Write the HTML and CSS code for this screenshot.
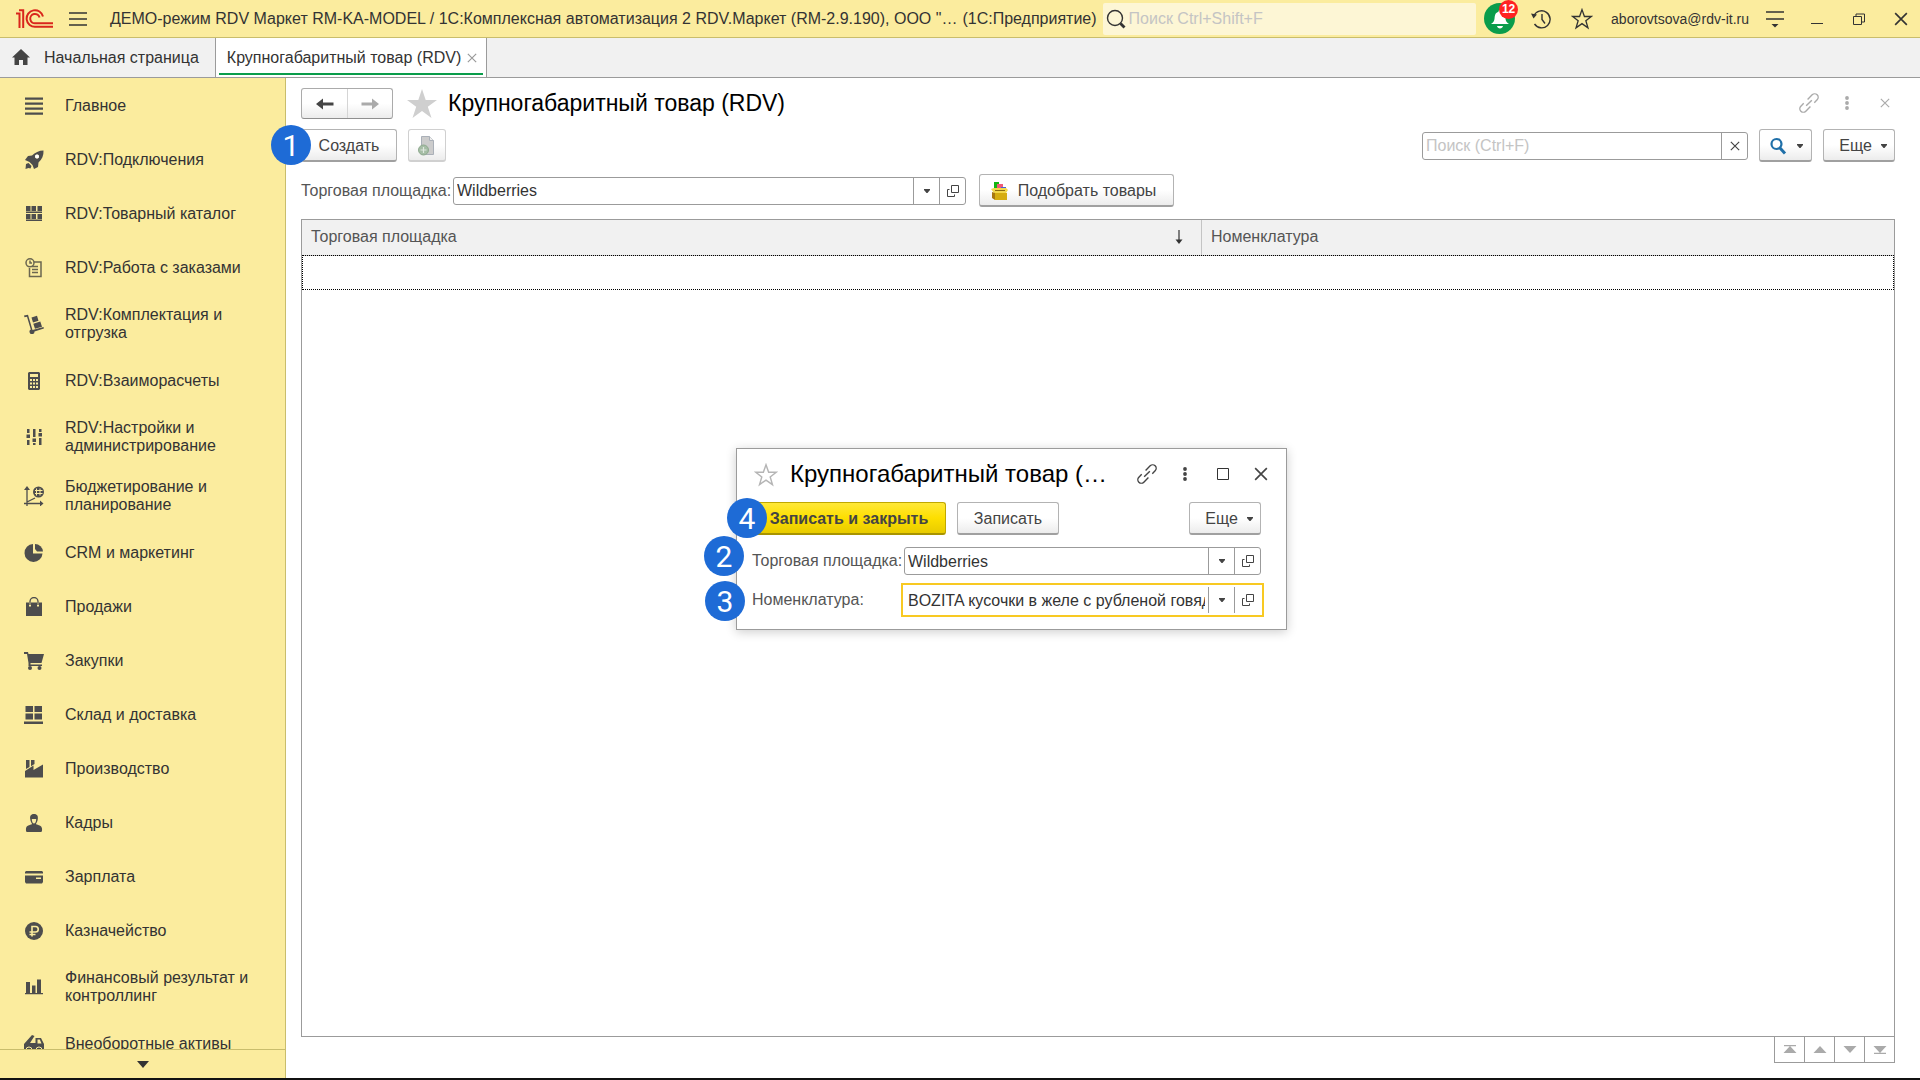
FILE: index.html
```
<!DOCTYPE html>
<html lang="ru">

<head>
    <meta charset="UTF-8">
    <meta name="viewport" content="width=device-width, initial-scale=1.0">
    <title>Крупногабаритный товар (RDV)</title>
    <link rel="stylesheet" href="styles.css">
</head>

<body>
    <!-- Общие значки -->
    <svg class="sprite" width="0" height="0" aria-hidden="true">
        <symbol id="i-down" viewBox="0 0 6 4"><path d="M0 0h6v1L3.500 4h-1L0 1z" fill="currentColor"/></symbol>
        <symbol id="i-open" viewBox="0 0 14 14"><path d="M5.500 1.500h7v7h-7zM3.500 5.500h-2v7h7v-2" fill="none" stroke="currentColor"/></symbol>
        <symbol id="i-link" viewBox="0 0 20 20"><path transform="rotate(-45 10 10)" d="M11.500 6.500h6.500a3.500 3.500 0 0 1 0 7h-4M8.500 13.500H2a3.500 3.500 0 0 1 0-7h4M6 10h8" fill="none" stroke="currentColor" stroke-width="1.400"/></symbol>
        <symbol id="i-dots" viewBox="0 0 4 14"><circle cx="2" cy="2" r="1.900"/><circle cx="2" cy="7" r="1.900"/><circle cx="2" cy="12" r="1.900"/></symbol>
        <symbol id="i-close" viewBox="0 0 12 12"><path d="M1 1l10 10M11 1L1 11" fill="none" stroke="currentColor" stroke-width="1.400"/></symbol>
        <symbol id="i-star" viewBox="0 0 20 20"><path d="M10 1.500l2.200 6.200h6.300l-5 3.900 1.900 6.400-5.400-3.800L4.600 18l1.900-6.400-5-3.900h6.300z" stroke="currentColor" stroke-width="1.200"/></symbol>
    </svg>

    <header class="topbar">
        <svg class="logo" width="38" height="20" viewBox="0 0 38 20" fill="none" stroke="#d9261c" stroke-width="2">
            <path d="M0 4.500h3.500V19M3 1.200h4.200V19"/>
            <path d="M27 7.500A8.300 8.300 0 1 0 19.500 17.800H37"/>
            <path d="M23.500 8.500A4.700 4.700 0 1 0 19.500 14.300H37"/>
        </svg>
        <button class="icon-btn burger" aria-label="Меню">
            <svg width="18" height="16" viewBox="0 0 18 16" stroke="#333" stroke-width="1.300"><path d="M0 2h18M0 8h18M0 14h18"/></svg>
        </button>
        <div class="app-title">ДЕМО-режим RDV Маркет RM-KA-MODEL / 1С:Комплексная автоматизация 2 RDV.Маркет (RM-2.9.190), ООО "…</div>
        <div class="app-name">(1С:Предприятие)</div>
        <label class="top-search">
            <svg width="20" height="20" viewBox="0 0 20 20" fill="none" stroke="#333"><circle cx="9" cy="9" r="7.500" stroke-width="1.400"/><path d="M14.500 14.500l4 4" stroke-width="2.800"/></svg>
            <input type="text" placeholder="Поиск Ctrl+Shift+F" aria-label="Поиск">
        </label>
        <button class="icon-btn bell" aria-label="Оповещения">
            <svg width="18" height="20" viewBox="0 0 18 20" fill="#fff"><path d="M9 1c1 0 1.500.7 1.500 1.700 3 .8 3.600 3.300 3.900 6.300.3 2.800 1 4.500 3.600 6H0c2.600-1.500 3.300-3.200 3.600-6 .3-3 .9-5.500 3.900-6.300C7.500 1.700 8 1 9 1zM6 17h6c-.3 1.600-1.500 2.500-3 2.500S6.300 18.600 6 17z"/></svg>
            <span class="bell-count">12</span>
        </button>
        <button class="icon-btn history" aria-label="История">
            <svg width="20" height="20" viewBox="0 0 20 20" fill="none" stroke="#333" stroke-width="1.400"><path d="M2.800 7A8.500 8.500 0 1 1 3.500 15M11 5v5.500l3 4"/><path d="M0 4.500l6 1-3.500 4z" fill="#333" stroke="none"/></svg>
        </button>
        <button class="icon-btn favorites" aria-label="Избранное">
            <svg width="22" height="22" fill="none" color="#333"><use href="#i-star"/></svg>
        </button>
        <a class="user" href="#">aborovtsova@rdv-it.ru</a>
        <button class="icon-btn settings" aria-label="Настройки">
            <svg width="18" height="18" viewBox="0 0 18 18" stroke="#333" stroke-width="1.400"><path d="M0 2h18M0 9h18"/><path d="M5.500 14h7L9 17.500z" fill="#333" stroke="none"/></svg>
        </button>
        <button class="icon-btn minimize" aria-label="Свернуть">
            <svg width="12" height="12" viewBox="0 0 12 12" stroke="#333"><path d="M0 10.500h12"/></svg>
        </button>
        <button class="icon-btn restore" aria-label="Развернуть">
            <svg width="12" height="12" viewBox="0 0 12 12" fill="none" stroke="#333"><path d="M.500 3.500h8v8h-8zM3 3V1h8.500v8H9"/></svg>
        </button>
        <button class="icon-btn" aria-label="Закрыть">
            <svg width="14" height="14" color="#333"><use href="#i-close"/></svg>
        </button>
    </header>

    <nav class="tabs">
        <a class="tab home" href="#">
            <svg width="20" height="18" viewBox="0 0 20 18" fill="#444"><path d="M10 0l9 8.500h-2.500V16H12v-5H8v5H3.500V8.500H1z"/></svg>
            Начальная страница
        </a>
        <div class="tab active">
            <a href="#">Крупногабаритный товар (RDV)</a>
            <button class="icon-btn" aria-label="Закрыть вкладку"><svg width="10" height="10" color="#999"><use href="#i-close"/></svg></button>
        </div>
    </nav>

    <div class="workspace">
        <aside class="sidebar">
            <nav class="menu">
                <a href="#"><svg viewBox="0 0 20 20"><path d="M1 1.500h18v2.200H1zM1 6.500h18v2.200H1zM1 11.500h18v2.200H1zM1 16.500h18v2.200H1z"/></svg><span>Главное</span></a>
                <a href="#"><svg viewBox="0 0 20 20"><path fill-rule="evenodd" d="M19.500.5c.3 5-1.500 9-5 12l-.500 4.500-4 2-1.500-4-3-3L1 10l3-4 4-.500C11 2.500 15 .5 19.500.5zM13 4.500a2 2 0 1 0 .1 4 2 2 0 0 0-.1-4z"/><circle cx="13" cy="6.500" r="2" fill="#fff"/><path d="M2 14l2.500-1 3 3-1 2.500-2-.500-3 1z"/></svg><span>RDV:Подключения</span></a>
                <a href="#"><svg viewBox="0 0 20 20"><path d="M2 2h4.500v5H2zM7.500 2H12v5H7.500zM13.500 2H18v5h-4.500zM2 10h4.500v5H2zM7.500 10H12v5H7.500zM13.500 10H18v5h-4.500zM2 7.500h16V9H2zM2 15.500h16V17H2z"/></svg><span>RDV:Товарный каталог</span></a>
                <a href="#"><svg viewBox="0 0 20 20" class="line"><path d="M10 4h7v14.500H5.500V10M8 8.500h6M8 11.500h6M8 14.500h6"/><circle cx="6" cy="4.800" r="4"/><path d="M6 2.500V5h2"/></svg><span>RDV:Работа с заказами</span></a>
                <a href="#"><svg viewBox="0 0 20 20"><path d="M0 1.500l4-.8L8.500 16l11-3 .4 1.600-9.400 3A2.500 2.500 0 1 1 6.800 15.500L3 2.700l-2.500.5z"/><path d="M7.500 3.500l5.500-1.700 1.500 5L9 8.500zM9.300 9.700l7-2.200 1.700 5.200-7 2.100z"/></svg><span>RDV:Комплектация и отгрузка</span></a>
                <a href="#"><svg viewBox="0 0 20 20"><path fill-rule="evenodd" d="M5 1h10l1 1v16l-1 1H5l-1-1V2zM6 3v3h8V3zM6 8v2h2V8zM9 8v2h2V8zM12 8v2h2V8zM6 11.500v2h2v-2zM9 11.500v2h2v-2zM12 11.500v2h2v-2zM6 15v2h2v-2zM9 15v2h2v-2zM12 15v2h2v-2z"/></svg><span>RDV:Взаиморасчеты</span></a>
                <a href="#"><svg viewBox="0 0 20 20"><path d="M3 2h2.500v4H3zM3 13h2.500v5H3zM2.500 7.500h3.500v3.500H2.500zM9 2h2.500v8H9zM9 16h2.500v2H9zM8.500 11.500H12V15H8.500zM15 2h2.500v3H15zM15 11h2.500v7H15zM14.500 6H18v3.500h-3.500z"/></svg><span>RDV:Настройки и администрирование</span></a>
                <a href="#"><svg viewBox="0 0 20 20"><circle cx="14.500" cy="6" r="5.500"/><path d="M12.500 2.500v7M16 2.500v7M11 4.500h7.500M11 7.500h7.500" stroke="#fbec9e"/><path d="M3 20V3M0 17.500h17M3 16l8-4" fill="none" stroke="#4d4d4d" stroke-width="1.300"/><path d="M0 4l3-4 3 4zM16 14.500l3.500 3-3.500 3z"/></svg><span>Бюджетирование и планирование</span></a>
                <a href="#"><svg viewBox="0 0 20 20"><path d="M9 1v9.500h9.500A9 9 0 1 1 9 1z"/><path d="M11 1a8 8 0 0 1 8 7.500h-6L11 6z"/></svg><span>CRM и маркетинг</span></a>
                <a href="#"><svg viewBox="0 0 20 20"><path d="M2 5.500h3v4h2v-4h6v4h2v-4h3V19H2z"/><path d="M6 8V4.500a4 4 0 0 1 8 0V8" fill="none" stroke="#4d4d4d" stroke-width="1.300"/></svg><span>Продажи</span></a>
                <a href="#"><svg viewBox="0 0 20 20"><path d="M0 1h4l.500 2H20l-2.500 9H6.500v1.500H18V15H4.500v-3L3 3H0z"/><circle cx="6" cy="17" r="2"/><circle cx="15.500" cy="17" r="2"/></svg><span>Закупки</span></a>
                <a href="#"><svg viewBox="0 0 20 20"><path d="M1.500 1h7.500v6H1.500zM10.500 1H18v6h-7.500zM1.500 8.500h7.500v6H1.500zM10.500 8.500H18v6h-7.500zM0 16.500h19V19H0z"/></svg><span>Склад и доставка</span></a>
                <a href="#"><svg viewBox="0 0 20 20"><path d="M1 18.500V12l8.500-5.500V11L19 5.500v13zM2 1h3.500v7L2 10zM7 1h3.500v4L7 7.200z"/></svg><span>Производство</span></a>
                <a href="#"><svg viewBox="0 0 20 20"><path fill-rule="evenodd" d="M10 1c3.500 0 4.200 2.500 3.800 5-.3 2.500-1.300 4-2 5 2.700 1.500 5.700 1.200 6.200 4.500.2 2 0 3.500-1 3.500H3c-1 0-1.200-1.500-1-3.500.5-3.300 3.500-3 6.200-4.500-.7-1-1.700-2.500-2-5C5.800 3.500 6.500 1 10 1zM7.800 6c0 3 1.200 4.500 2.200 4.500s2.200-1.500 2.200-4.500z"/></svg><span>Кадры</span></a>
                <a href="#"><svg viewBox="0 0 20 20"><path fill-rule="evenodd" d="M2 4h16l1 1v1.500H1V5zM1 8.500h18V15l-1 1.500H2L1 15zM12 10.500v1.500h5v-1.500z"/></svg><span>Зарплата</span></a>
                <a href="#"><svg viewBox="0 0 20 20"><circle cx="10" cy="10" r="9"/><path d="M8 15.500V5.500h3.500a2.700 2.700 0 0 1 0 5.500H5.500M5.500 13.500h6" fill="none" stroke="#fbec9e" stroke-width="1.600"/></svg><span>Казначейство</span></a>
                <a href="#"><svg viewBox="0 0 20 20"><path d="M2 5h4v11H2zM8 8.500h3.500V16H8zM13 2.500h4V16h-4zM1 16h18v1.200H1z"/></svg><span>Финансовый результат и контроллинг</span></a>
                <a href="#"><svg viewBox="0 0 20 20"><path fill-rule="evenodd" d="M0 10l8-9 2.500 1L6 9h5.500V4H17l3 6v6H0zM13.500 5.500v4h4l-1.700-4z"/><circle cx="5" cy="16" r="3" stroke="#fbec9e"/><circle cx="15" cy="16" r="3" stroke="#fbec9e"/></svg><span>Внеоборотные активы</span></a>
            </nav>
            <button class="menu-more" aria-label="Прокрутить вниз">
                <svg width="12" height="7" viewBox="0 0 12 7" fill="#333"><path d="M0 0h12L6 7z"/></svg>
            </button>
        </aside>

        <main class="page">
            <div class="page-head">
                <div class="nav-buttons">
                    <button aria-label="Назад"><svg width="18" height="12" viewBox="0 0 18 12" fill="#444"><path d="M0 6l7-5.500v4h10.500v3H7v4z"/></svg></button>
                    <button aria-label="Вперед"><svg width="18" height="12" viewBox="0 0 18 12" fill="#aaa"><path d="M18 6l-7-5.500v4H.500v3H11v4z"/></svg></button>
                </div>
                <svg class="page-star" width="32" height="30" viewBox="0 0 32 30" fill="#cfcfcf"><path d="M16 0l3.700 11H31l-9.200 6.700L25.500 29 16 22 6.500 29l3.700-11.300L1 11h11.300z"/></svg>
                <h1>Крупногабаритный товар (RDV)</h1>
                <div class="window-tools">
                    <button class="icon-btn" aria-label="Ссылка"><svg width="20" height="20"><use href="#i-link"/></svg></button>
                    <button class="icon-btn" aria-label="Действия"><svg width="4" height="14" fill="currentColor"><use href="#i-dots"/></svg></button>
                    <button class="icon-btn" aria-label="Закрыть"><svg width="10" height="10"><use href="#i-close"/></svg></button>
                </div>
            </div>

            <div class="toolbar">
                <div class="marked">
                    <button class="btn create">Создать</button>
                    <span class="marker">1</span>
                </div>
                <button class="btn copy" aria-label="Скопировать" disabled>
                    <svg width="18" height="20" viewBox="0 0 18 20"><path d="M3.500.500h8l4 4v14h-12z" fill="#ccc" stroke="#aab0b8"/><path d="M11.500.500v4h4" fill="#eee" stroke="#aab0b8"/><circle cx="5.500" cy="14" r="5" fill="#a5bda5" stroke="#8faa8f"/><path d="M5.500 11v6M2.500 14h6" stroke="#dfe8df" stroke-width="1.200"/></svg>
                </button>
                <div class="list-search">
                    <input type="text" placeholder="Поиск (Ctrl+F)" aria-label="Поиск в списке">
                    <button aria-label="Очистить"><svg width="10" height="10"><use href="#i-close"/></svg></button>
                </div>
                <button class="btn find" aria-label="Найти">
                    <svg width="18" height="18" viewBox="0 0 18 18" fill="none" stroke="#1f6fa8"><circle cx="7.500" cy="7" r="5" stroke-width="2.200"/><path d="M11 11l5 5.500" stroke-width="3"/></svg>
                    <svg width="6" height="4"><use href="#i-down"/></svg>
                </button>
                <button class="btn more">Еще <svg width="6" height="4"><use href="#i-down"/></svg></button>
            </div>

            <div class="filter">
                <label for="market">Торговая площадка:</label>
                <div class="field">
                    <input type="text" id="market" value="Wildberries">
                    <button aria-label="Выбрать"><svg width="6" height="4"><use href="#i-down"/></svg></button>
                    <button aria-label="Открыть"><svg width="14" height="14"><use href="#i-open"/></svg></button>
                </div>
                <button class="btn pick">
                    <svg width="18" height="20" viewBox="0 0 18 20"><path d="M3 1h5v9H3z" fill="#12b512"/><path d="M6 3h6v7H6z" fill="#f05a78"/><path d="M10 6h5v5h-5z" fill="#4664d8"/><path d="M0 8l3-1h12l2 2-2 3H3z" fill="#f3d84a"/><path d="M4 9h10v1H4z" fill="#8a6a10"/><path d="M1 11l3 1v7l-3-2z" fill="#a87810"/><path d="M4 12h12v7H4z" fill="#d6ad10"/></svg>
                    Подобрать товары
                </button>
            </div>

            <div class="grid">
                <table>
                    <thead>
                        <tr>
                            <th class="col-market">
                                <div>Торговая площадка <svg width="8" height="14" viewBox="0 0 8 14"><path d="M4 0v11" stroke="#333" stroke-width="1.200"/><path d="M.500 9.500h7L4 14z" fill="#333"/></svg></div>
                            </th>
                            <th>Номенклатура</th>
                        </tr>
                    </thead>
                    <tbody>
                        <tr>
                            <td colspan="2"></td>
                        </tr>
                    </tbody>
                </table>
            </div>
            <div class="pager">
                <button aria-label="В начало"><svg width="14" height="9" viewBox="0 0 14 9"><path d="M1 0h12v1.200H1zM7 1l6.500 7H.500z"/></svg></button>
                <button aria-label="Вверх"><svg width="14" height="9" viewBox="0 0 14 9"><path d="M7 1l6.500 7H.500z"/></svg></button>
                <button aria-label="Вниз"><svg width="14" height="9" viewBox="0 0 14 9"><path d="M7 8L.500 1h13z"/></svg></button>
                <button aria-label="В конец"><svg width="14" height="9" viewBox="0 0 14 9"><path d="M7 8L.500 1h13zM1 7.800h12V9H1z"/></svg></button>
            </div>
        </main>
    </div>

    <!-- Окно элемента -->
    <section class="dialog" role="dialog" aria-labelledby="dialog-title">
        <div class="dialog-head">
            <svg class="dialog-star" width="24" height="24" fill="none" color="#b5b5b5"><use href="#i-star"/></svg>
            <h2 id="dialog-title">Крупногабаритный товар (…</h2>
            <div class="window-tools">
                <button class="icon-btn" aria-label="Ссылка"><svg width="20" height="20"><use href="#i-link"/></svg></button>
                <button class="icon-btn" aria-label="Действия"><svg width="4" height="14" fill="currentColor"><use href="#i-dots"/></svg></button>
                <button class="icon-btn" aria-label="Развернуть"><svg width="12" height="12" viewBox="0 0 12 12" fill="none" stroke="#333"><path d="M.500.500h11v11H.500z"/></svg></button>
                <button class="icon-btn" aria-label="Закрыть"><svg width="14" height="14"><use href="#i-close"/></svg></button>
            </div>
        </div>
        <div class="dialog-bar">
            <button class="btn primary">Записать и закрыть</button>
            <button class="btn save">Записать</button>
            <button class="btn more">Еще <svg width="6" height="4"><use href="#i-down"/></svg></button>
        </div>
        <div class="form-row">
            <label for="d-market">Торговая площадка:</label>
            <div class="field">
                <input type="text" id="d-market" value="Wildberries">
                <button aria-label="Выбрать"><svg width="6" height="4"><use href="#i-down"/></svg></button>
                <button aria-label="Открыть"><svg width="14" height="14"><use href="#i-open"/></svg></button>
            </div>
        </div>
        <div class="form-row">
            <label for="d-item">Номенклатура:</label>
            <div class="field focused">
                <input type="text" id="d-item" value="BOZITA кусочки в желе с рубленой говядиной">
                <button aria-label="Выбрать"><svg width="6" height="4"><use href="#i-down"/></svg></button>
                <button aria-label="Открыть"><svg width="14" height="14"><use href="#i-open"/></svg></button>
            </div>
        </div>
        <span class="marker m2">2</span>
        <span class="marker m3">3</span>
        <span class="marker m4">4</span>
    </section>
</body>

</html>
```
FILE: styles.css
```
* {
    margin: 0;
    padding: 0;
    box-sizing: border-box;
}

body {
    font-family: "Liberation Sans", Arial, sans-serif;
    font-size: 16px;
    line-height: 18px;
    color: #333;
    background-color: #fff;
    height: 100vh;
    display: flex;
    flex-direction: column;
    overflow: hidden;
    position: relative;
    border-bottom: 2px solid #111;
}

a {
    color: inherit;
    text-decoration: none;
}

button,
input {
    font: inherit;
    color: inherit;
    background: none;
    border: none;
    outline: none;
}

svg {
    display: block;
    flex-shrink: 0;
}

.sprite {
    position: absolute;
}

.icon-btn {
    display: flex;
    align-items: center;
    justify-content: center;
    flex-shrink: 0;
}

/* Верхняя панель */
.topbar {
    display: flex;
    align-items: center;
    height: 38px;
    flex-shrink: 0;
    padding: 0 12px 0 16px;
    background-color: #fbec9e;
    border-bottom: 1px solid #c9bd6c;
}

.burger {
    margin: 0 23px 0 15px;
}

.app-title {
    white-space: nowrap;
}

.app-name {
    margin: 0 6px 0 5px;
    white-space: nowrap;
}

.top-search {
    flex: 1;
    display: flex;
    align-items: center;
    gap: 3px;
    height: 32px;
    padding-left: 3px;
    background-color: #fdf6d5;
    border-radius: 2px;
}

.top-search input {
    flex: 1;
    min-width: 0;
}

input::placeholder {
    color: #c4c4c4;
    opacity: 1;
}

.bell {
    position: relative;
    width: 31px;
    height: 31px;
    margin: 0 16px 0 8px;
    border-radius: 50%;
    background-color: #0a9d4b;
}

.bell-count {
    position: absolute;
    top: -3px;
    right: -3px;
    width: 19px;
    height: 19px;
    border-radius: 50%;
    background-color: #f22;
    color: #fff;
    font-size: 12px;
    font-weight: bold;
    line-height: 19px;
    text-align: center;
}

.history {
    margin-right: 20px;
}

.favorites {
    margin-right: 18px;
}

.user {
    font-size: 14px;
}

.settings {
    margin: 0 27px 0 17px;
}

.minimize {
    margin-right: 30px;
}

.restore {
    margin-right: 29px;
}

/* Вкладки */
.tabs {
    display: flex;
    height: 40px;
    flex-shrink: 0;
    background-color: #f1f1f1;
    border-bottom: 1px solid #9b9b9b;
}

.tab {
    display: flex;
    align-items: center;
}

.tab.home {
    gap: 13px;
    padding: 0 16px 0 11px;
}

.tab.active {
    position: relative;
    gap: 6px;
    padding: 0 9px 0 11px;
    background-color: #fff;
    border-left: 1px solid #9b9b9b;
    border-right: 1px solid #9b9b9b;
}

.tab.active::after {
    content: "";
    position: absolute;
    left: 3px;
    right: 3px;
    bottom: 2px;
    height: 2px;
    background-color: #0a9d4b;
}

.workspace {
    flex: 1;
    min-height: 0;
    display: flex;
}

/* Разделы */
.sidebar {
    width: 286px;
    flex-shrink: 0;
    display: flex;
    flex-direction: column;
    background-color: #fbec9e;
    border-right: 1px solid #c9bd6c;
}

.menu {
    flex: 1;
    min-height: 0;
    overflow: hidden;
}

.menu a {
    display: flex;
    align-items: center;
    gap: 21px;
    min-height: 54px;
    padding: 12px 24px 11px;
}

.menu svg {
    width: 20px;
    height: 20px;
    fill: #4d4d4d;
}

.menu .line {
    fill: none;
    stroke: #6b6650;
    stroke-width: 1.5px;
}

.menu-more {
    display: flex;
    align-items: center;
    justify-content: center;
    height: 29px;
    flex-shrink: 0;
    border-top: 1px solid #c9bd6c;
}

/* Страница списка */
.page {
    flex: 1;
    min-width: 0;
    display: flex;
    flex-direction: column;
    padding: 10px 25px 15px 15px;
}

.page-head {
    display: flex;
    align-items: center;
    height: 31px;
    margin-bottom: 10px;
}

.nav-buttons {
    display: flex;
    height: 31px;
    border: 1px solid #ababab;
    border-bottom-color: #8f8f8f;
    border-radius: 3px;
    background: linear-gradient(#fff 50%, #ececec);
}

.nav-buttons button {
    display: flex;
    align-items: center;
    justify-content: center;
    width: 45px;
}

.nav-buttons button + button {
    border-left: 1px solid #d5d5d5;
}

.page-star {
    margin: 0 10px 0 13px;
}

h1,
h2 {
    padding-bottom: 2px;
    font-weight: normal;
    line-height: 28px;
    color: #000;
    white-space: nowrap;
}

h1 {
    font-size: 23px;
}

h2 {
    font-size: 24px;
}

.window-tools {
    display: flex;
    align-items: center;
    gap: 18px;
    margin-left: auto;
    padding-bottom: 2px;
    color: #aaa;
}

.window-tools button {
    width: 20px;
}

.btn {
    display: flex;
    align-items: center;
    justify-content: center;
    height: 33px;
    padding-top: 1px;
    color: #444;
    border: 1px solid #b3b3b3;
    border-bottom: 2px solid #a0a0a0;
    border-radius: 3px;
    background: linear-gradient(#fff 50%, #ececec);
    white-space: nowrap;
}

.toolbar {
    display: flex;
    align-items: center;
    margin-bottom: 12px;
}

.marked {
    position: relative;
}

.marker {
    position: absolute;
    top: -4px;
    left: -30px;
    width: 40px;
    height: 40px;
    border-radius: 50%;
    background-color: #1e6bd6;
    color: #fff;
    font-family: Roboto, "Liberation Sans", sans-serif;
    font-size: 30px;
    line-height: 42px;
    text-align: center;
}

.btn.create {
    width: 96px;
}

.btn.copy {
    width: 38px;
    margin-left: 11px;
    border-color: #d0d0d0;
}

.list-search,
.field {
    display: flex;
    height: 28px;
    border: 1px solid #9b9b9b;
    border-radius: 3px;
    background-color: #fff;
}

.list-search {
    width: 326px;
    margin: 0 11px 0 auto;
}

.list-search input,
.field input {
    flex: 1;
    min-width: 0;
    padding: 1px 3px 0;
}

.list-search button,
.field button {
    display: flex;
    align-items: center;
    justify-content: center;
    width: 26px;
    color: #444;
    border-left: 1px solid #9b9b9b;
}

.btn.find {
    gap: 10px;
    width: 53px;
    margin-right: 11px;
}

.btn.more {
    gap: 9px;
    width: 72px;
    padding-left: 8px;
}

.filter {
    display: flex;
    align-items: center;
    margin-bottom: 12px;
    color: #555;
}

.filter label,
.form-row label {
    width: 152px;
}

.filter .field {
    width: 513px;
    margin-right: 13px;
}

.field input {
    color: #333;
}

.btn.pick {
    gap: 9px;
    width: 195px;
    padding-right: 6px;
}

/* Таблица */
.grid {
    flex: 1;
    min-height: 0;
    border: 1px solid #9b9b9b;
}

table {
    width: 100%;
    border-collapse: collapse;
    table-layout: fixed;
}

th {
    height: 35px;
    padding: 0 9px;
    text-align: left;
    font-weight: normal;
    color: #555;
    background-color: #f1f1f1;
    border-bottom: 1px solid #c4c4c4;
}

th + th {
    border-left: 1px solid #c4c4c4;
}

th div {
    display: flex;
    align-items: center;
    justify-content: space-between;
    padding-right: 9px;
}

.col-market {
    width: 56.5%;
}

td {
    height: 35px;
    outline: 1px dotted #000;
    outline-offset: -1px;
}

.pager {
    display: flex;
    align-self: flex-end;
    border: 1px solid #9b9b9b;
    border-width: 0 1px 1px 0;
}

.pager button {
    display: flex;
    align-items: center;
    justify-content: center;
    width: 30px;
    height: 25px;
    border-left: 1px solid #9b9b9b;
    fill: #aaa;
}

/* Окно элемента */
.dialog {
    position: absolute;
    top: 448px;
    left: 736px;
    width: 551px;
    padding: 10px 25px 4px 15px;
    background-color: #fff;
    border: 1px solid #9b9b9b;
    box-shadow: 0 2px 10px rgba(0, 0, 0, 0.2);
}

.dialog-head {
    display: flex;
    align-items: center;
    height: 31px;
    margin-bottom: 12px;
}

.dialog-star {
    margin: 0 12px 0 2px;
}

.dialog .window-tools {
    margin-right: -10px;
    color: #444;
}

.dialog-bar {
    display: flex;
    margin-bottom: 12px;
}

.btn.primary {
    width: 194px;
    font-weight: bold;
    border-color: #c0a800;
    border-bottom-color: #a89400;
    background: linear-gradient(#ffe838, #fddf00 50%, #e8cb00);
}

.btn.save {
    width: 102px;
    margin-left: 11px;
}

.dialog-bar .more {
    margin-left: auto;
}

.form-row {
    display: flex;
    align-items: center;
    height: 28px;
    margin-bottom: 11px;
    color: #555;
}

.form-row .field {
    flex: 1;
}

.field.focused {
    border-color: #fff;
    border-radius: 0;
    outline: 2px solid #f8c922;
    outline-offset: 1px;
}

.marker.m2 {
    top: 87px;
    left: -33px;
}

.marker.m3 {
    top: 132px;
    left: -32px;
}

.marker.m4 {
    top: 49px;
    left: -10px;
}
```
